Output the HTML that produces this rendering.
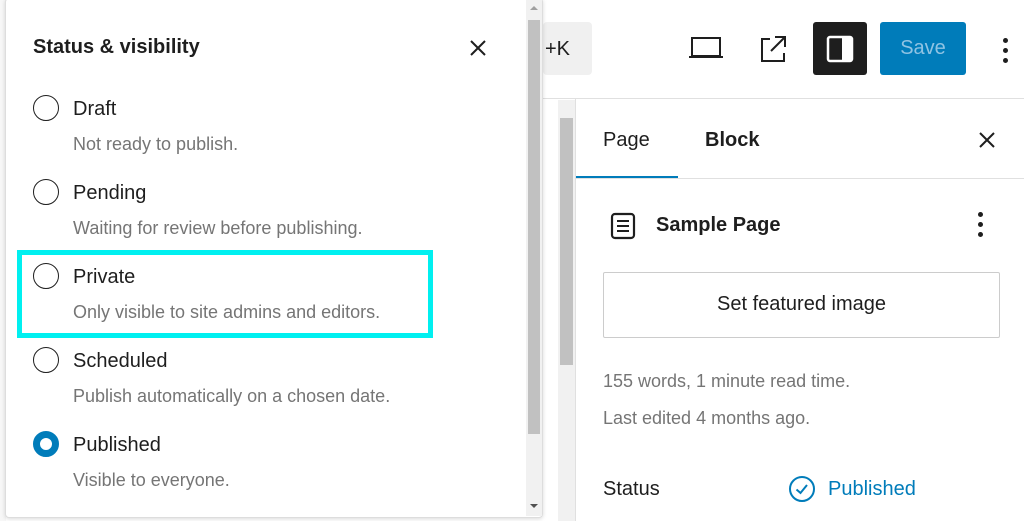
<!DOCTYPE html>
<html><head><meta charset="utf-8"><style>
*{box-sizing:border-box;margin:0;padding:0}
body{width:1024px;height:521px;overflow:hidden;background:#fff;font-family:"Liberation Sans",sans-serif;position:relative;color:#1e1e1e}
.a{position:absolute}
.t{font-size:20px}
.g{color:#757575;font-size:18px}
.radio{position:absolute;left:33px;width:26px;height:26px;border:1.5px solid #1e1e1e;border-radius:50%}
</style></head><body>
<div class="a" style="left:0;top:98px;width:1024px;height:1px;background:#e0e0e0"></div>
<div class="a" style="left:543px;top:22px;width:49px;height:53px;background:#f0f0f0;border-radius:4px"></div>
<div class="a t" style="left:545px;top:38px;color:#1e1e1e">+K</div>
<svg class="a" style="left:688px;top:34px" width="36" height="28" viewBox="0 0 36 28"><rect x="4" y="4" width="28" height="18" fill="none" stroke="#1e1e1e" stroke-width="2"/><line x1="1" y1="23" x2="35" y2="23" stroke="#1e1e1e" stroke-width="2"/></svg>
<svg class="a" style="left:758px;top:34px" width="30" height="30" viewBox="0 0 30 30"><path d="M12 5H4v22h22v-8" fill="none" stroke="#1e1e1e" stroke-width="2"/><path d="M17 3h10v10M27 3L13 17" fill="none" stroke="#1e1e1e" stroke-width="2"/></svg>
<div class="a" style="left:813px;top:22px;width:54px;height:53px;background:#1e1e1e;border-radius:3px"></div>
<svg class="a" style="left:826px;top:35px" width="28" height="28" viewBox="0 0 28 28"><rect x="2" y="2" width="24" height="24" rx="2" fill="none" stroke="#fff" stroke-width="2.5"/><rect x="16" y="2" width="10" height="24" fill="#fff"/></svg>
<div class="a" style="left:880px;top:22px;width:86px;height:53px;background:#007cba;border-radius:3px;color:#8fc3e3;font-size:20px;text-align:center;line-height:53px">Save</div>
<div class="a" style="left:1003px;top:38px;width:5px;height:5px;border-radius:50%;background:#1e1e1e"></div>
<div class="a" style="left:1003px;top:48px;width:5px;height:5px;border-radius:50%;background:#1e1e1e"></div>
<div class="a" style="left:1003px;top:58px;width:5px;height:5px;border-radius:50%;background:#1e1e1e"></div>
<div class="a" style="left:558px;top:100px;width:17px;height:421px;background:#f1f1f1"></div>
<div class="a" style="left:560px;top:118px;width:13px;height:247px;background:#c1c1c1"></div>
<div class="a" style="left:575px;top:99px;width:1px;height:422px;background:#e0e0e0"></div>
<div class="a t" style="left:603px;top:129px">Page</div>
<div class="a t" style="left:705px;top:129px;font-weight:bold;color:#1e1e1e">Block</div>
<div class="a" style="left:576px;top:176px;width:102px;height:3px;background:#007cba"></div>
<div class="a" style="left:576px;top:178px;width:448px;height:1px;background:#e0e0e0"></div>
<svg class="a" style="left:977px;top:130px" width="20" height="20" viewBox="0 0 20 20"><path d="M3 3L17 17M17 3L3 17" stroke="#1e1e1e" stroke-width="2"/></svg>
<svg class="a" style="left:610px;top:212px" width="26" height="28" viewBox="0 0 26 28"><rect x="2" y="2" width="22" height="24" rx="3" fill="none" stroke="#1e1e1e" stroke-width="2.2"/><path d="M7 9h12M7 14h12M7 19h12" stroke="#1e1e1e" stroke-width="2"/></svg>
<div class="a t" style="left:656px;top:214px;font-weight:bold">Sample Page</div>
<div class="a" style="left:978px;top:212px;width:5px;height:5px;border-radius:50%;background:#1e1e1e"></div>
<div class="a" style="left:978px;top:222px;width:5px;height:5px;border-radius:50%;background:#1e1e1e"></div>
<div class="a" style="left:978px;top:232px;width:5px;height:5px;border-radius:50%;background:#1e1e1e"></div>
<div class="a" style="left:603px;top:272px;width:397px;height:66px;border:1.5px solid #ccc;border-radius:2px;text-align:center;line-height:63px;font-size:20px">Set featured image</div>
<div class="a g" style="left:603px;top:371px">155 words, 1 minute read time.</div>
<div class="a g" style="left:603px;top:408px">Last edited 4 months ago.</div>
<div class="a t" style="left:603px;top:478px">Status</div>
<svg class="a" style="left:787px;top:474px" width="30" height="30" viewBox="0 0 30 30"><circle cx="15" cy="15" r="12" fill="none" stroke="#007cba" stroke-width="2"/><path d="M9.5 15.5l4 3.5 6.5-8" fill="none" stroke="#007cba" stroke-width="2"/></svg>
<div class="a t" style="left:828px;top:478px;color:#007cba">Published</div>
<div class="a" style="left:0;top:0;width:6px;height:521px;background:#f7f7f7"></div>
<div class="a" style="left:5px;top:-2px;width:538px;height:520px;background:#fff;border:1px solid #ddd;border-radius:4px;box-shadow:0 1px 4px rgba(0,0,0,.15)"></div>
<div class="a" style="left:526px;top:0;width:16px;height:516px;background:#f1f1f1"></div>
<div class="a" style="left:528px;top:20px;width:12px;height:414px;background:#c1c1c1"></div>
<div class="a" style="left:530px;top:6px;width:0;height:0;border-left:4px solid transparent;border-right:4px solid transparent;border-bottom:4px solid #a0a0a0"></div>
<div class="a" style="left:530px;top:504px;width:0;height:0;border-left:4px solid transparent;border-right:4px solid transparent;border-top:4px solid #505050"></div>
<div class="a" style="left:33px;top:36px;font-size:20px;font-weight:bold">Status &amp; visibility</div>
<svg class="a" style="left:468px;top:38px" width="20" height="20" viewBox="0 0 20 20"><path d="M3 3L17 17M17 3L3 17" stroke="#1e1e1e" stroke-width="2"/></svg>
<div class="radio" style="top:95px"></div>
<div class="a t" style="left:73px;top:98px">Draft</div>
<div class="a g" style="left:73px;top:134px">Not ready to publish.</div>
<div class="radio" style="top:179px"></div>
<div class="a t" style="left:73px;top:182px">Pending</div>
<div class="a g" style="left:73px;top:218px">Waiting for review before publishing.</div>
<div class="radio" style="top:263px"></div>
<div class="a t" style="left:73px;top:266px">Private</div>
<div class="a g" style="left:73px;top:302px">Only visible to site admins and editors.</div>
<div class="a" style="left:17px;top:250px;width:416px;height:88px;border:5px solid #00f0f0"></div>
<div class="radio" style="top:347px"></div>
<div class="a t" style="left:73px;top:350px">Scheduled</div>
<div class="a g" style="left:73px;top:386px">Publish automatically on a chosen date.</div>
<div class="a" style="left:33px;top:431px;width:26px;height:26px;border:7px solid #007cba;border-radius:50%"></div>
<div class="a t" style="left:73px;top:434px">Published</div>
<div class="a g" style="left:73px;top:470px">Visible to everyone.</div>
</body></html>
